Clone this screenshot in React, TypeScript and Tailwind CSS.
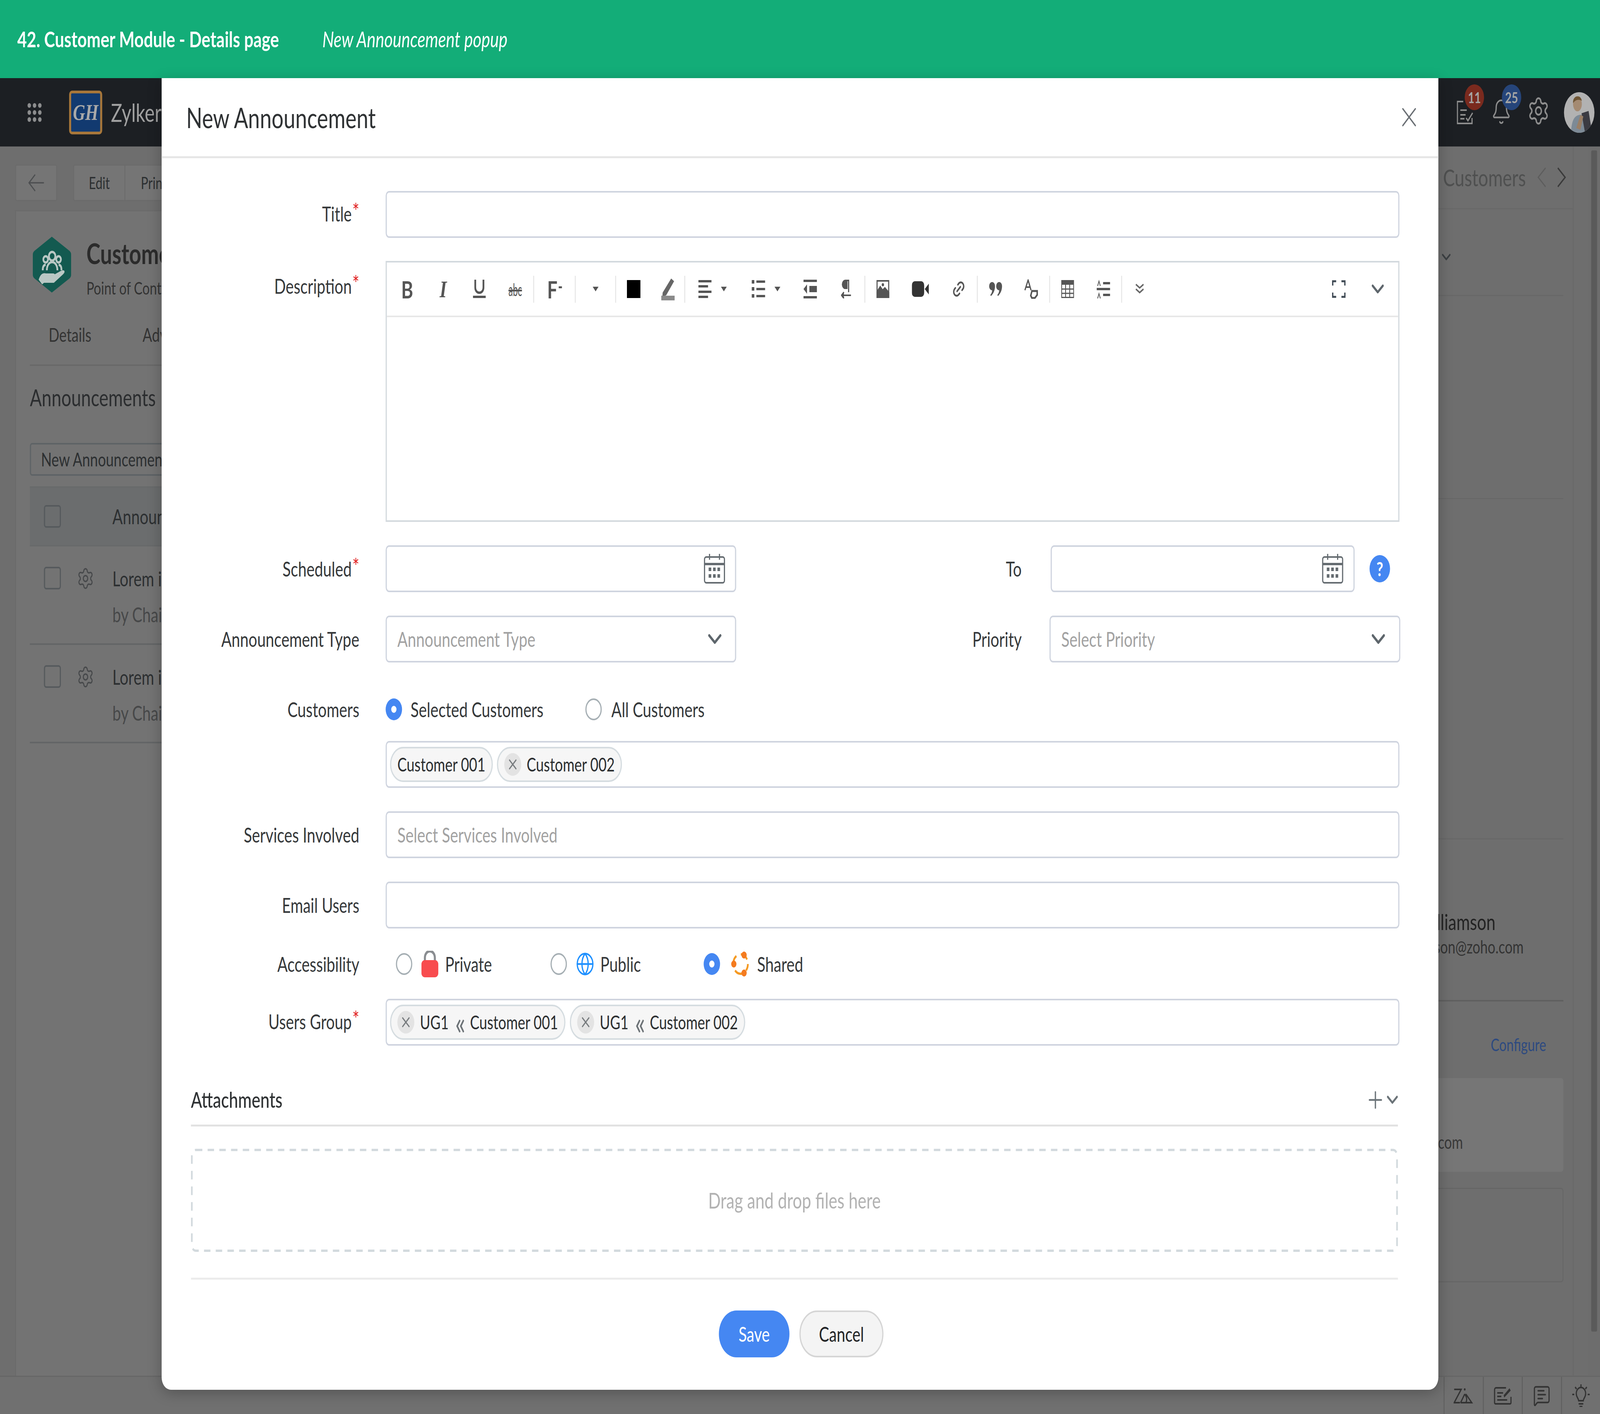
import type { ReactNode } from 'react';
import { Bell, Globe, Link2, MessageSquareText, Plus, Settings, X } from 'lucide-react';

function Req() {
  return <span className="relative top-[-6px] ml-[2px] text-[56px] leading-none text-[#e02020]">*</span>;
}

function Label({ children, className }: { children: ReactNode; className: string }) {
  return <div className={`shrink-0 text-right text-[52px] text-[#35383a] ${className}`}>{children}</div>;
}

function Radio({ on }: { on?: boolean }) {
  return on ? (
    <span className="flex h-[56px] w-[56px] shrink-0 items-center justify-center rounded-full bg-[#4587f2]">
      <span className="h-[18px] w-[18px] rounded-full bg-white" />
    </span>
  ) : (
    <span className="block h-[56px] w-[56px] shrink-0 rounded-full border-[4px] border-[#a6afb4] bg-white" />
  );
}

function ChipClose() {
  return (
    <span className="flex h-[58px] w-[58px] shrink-0 items-center justify-center rounded-full bg-[#e3e3e3] text-[#777b7e]">
      <X size={44} strokeWidth={2} />
    </span>
  );
}

function Chip({ children }: { children: ReactNode }) {
  return (
    <span className="flex h-[90px] items-center rounded-full border-[4px] border-[#d5dce0] bg-[#f6f6f6] px-[21px] text-[48px] text-[#2b2e30]">
      {children}
    </span>
  );
}

function GroupChip({ name }: { name: string }) {
  return (
    <Chip>
      <ChipClose />
      <span className="ml-[19px]">UG1</span>
      <span className="ml-[22px] mr-[15px] text-[84px] leading-none text-[#6d7377]">«</span>
      <span>{name}</span>
    </Chip>
  );
}

function Calendar() {
  return (
    <svg width="74" height="78" viewBox="0 0 74 78" fill="none" stroke="#646b70" strokeWidth="4">
      <rect x="3" y="9" width="68" height="66" rx="6" />
      <path d="M3 27h68" strokeWidth="6" />
      <path d="M20 1v15M54 1v15" />
      <g fill="#646b70" stroke="none">
        <rect x="17" y="36" width="9" height="9" />
        <rect x="32" y="36" width="9" height="9" />
        <rect x="47" y="36" width="9" height="9" />
        <rect x="17" y="53" width="9" height="9" />
        <rect x="32" y="53" width="9" height="9" />
        <rect x="47" y="53" width="9" height="9" />
      </g>
    </svg>
  );
}

function Chevron({ color = '#5e666c', width = 46 }: { color?: string; width?: number }) {
  return (
    <svg width={width} height={(width * 28) / 46} viewBox="0 0 46 28" fill="none" stroke={color} strokeWidth="7" strokeLinecap="round" strokeLinejoin="round">
      <path d="M4 5l19 18L42 5" />
    </svg>
  );
}

function Caret() {
  return (
    <svg width="20" height="12" viewBox="0 0 20 12" fill="#555">
      <path d="M0 0h20L10 12z" />
    </svg>
  );
}

function Sep() {
  return <span className="h-[69px] w-[3px] shrink-0 bg-[#e4e4e4]" />;
}

function Toolbar() {
  return (
    <div className="flex h-[140px] items-center border-b-[4px] border-[#e7e7e7] pl-[8px] text-[#555]">
      <span className="flex w-[123px] justify-center font-['Lato',sans-serif] text-[62px] font-bold leading-none">B</span>
      <span className="flex w-[123px] justify-center font-['Liberation_Serif',serif] text-[62px] font-bold italic leading-none">I</span>
      <span className="flex w-[123px] justify-center">
        <svg width="44" height="48" viewBox="0 0 44 48" fill="none" stroke="#555" strokeWidth="6">
          <path d="M8 0v20c0 18 28 18 28 0V0" />
          <path d="M0 44h44" />
        </svg>
      </span>
      <span className="flex w-[123px] scale-y-[1.5] justify-center text-[30px] leading-none line-through">abc</span>
      <Sep />
      <span className="flex w-[139px] items-start justify-center">
        <span className="text-[62px] font-bold leading-none">F</span>
        <span className="ml-[4px] mt-[24px] h-[5px] w-[11px] bg-[#555]" />
      </span>
      <Sep />
      <span className="flex w-[135px] justify-center"><Caret /></span>
      <Sep />
      <span className="flex w-[120px] justify-center">
        <span className="h-[46px] w-[46px] bg-black" />
      </span>
      <span className="flex w-[113px] justify-center">
        <svg width="46" height="58" viewBox="0 0 46 58" fill="none">
          <path d="M5 38L34 2l10 7-27 36-13 3z" fill="#666" />
          <rect x="0" y="46" width="46" height="12" fill="#8a8a8a" />
        </svg>
      </span>
      <Sep />
      <span className="flex w-[187px] items-center justify-center gap-[32px]">
        <svg width="45" height="46" viewBox="0 0 45 46" fill="#555">
          <rect width="45" height="6" />
          <rect y="13" width="33" height="6" />
          <rect y="27" width="45" height="6" />
          <rect y="40" width="33" height="6" />
        </svg>
        <Caret />
      </span>
      <span className="flex w-[178px] items-center justify-center gap-[32px]">
        <svg width="46" height="46" viewBox="0 0 46 46" fill="#555">
          <rect y="0" width="9" height="9" />
          <rect x="16" y="1" width="30" height="6" />
          <rect y="18" width="9" height="9" />
          <rect x="16" y="20" width="30" height="6" />
          <rect y="36" width="9" height="9" />
          <rect x="16" y="38" width="30" height="6" />
        </svg>
        <Caret />
      </span>
      <span className="flex w-[123px] justify-center">
        <svg width="46" height="48" viewBox="0 0 46 48" fill="#555">
          <rect width="46" height="6" />
          <rect y="42" width="46" height="6" />
          <path d="M0 24l12-12v24z" />
          <rect x="20" y="16" width="26" height="16" />
        </svg>
      </span>
      <span className="flex w-[124px] justify-center">
        <svg width="36" height="48" viewBox="0 0 36 48" fill="none" stroke="#555" strokeWidth="4">
          <path d="M28 2H15a9 9 0 0 0 0 20h5V2M26 2v30" />
          <path d="M15 3a9 9 0 0 0 0 19h5V3z" fill="#555" />
          <path d="M2 40h32" />
          <path d="M10 32l-8 8 8 8" fill="#555" />
        </svg>
      </span>
      <Sep />
      <span className="flex w-[120px] justify-center">
        <svg width="44" height="46" viewBox="0 0 44 46" fill="none" stroke="#555" strokeWidth="4">
          <rect x="2" y="2" width="40" height="42" />
          <path d="M2 30l11-13 8 9 8-6 13 12v12H2z" fill="#555" />
          <circle cx="22" cy="12" r="4" fill="#555" stroke="none" />
        </svg>
      </span>
      <span className="flex w-[136px] justify-center">
        <svg width="58" height="40" viewBox="0 0 58 40" fill="#333">
          <rect y="0" width="42" height="40" rx="10" />
          <path d="M44 20l14-14v28z" />
        </svg>
      </span>
      <span className="flex w-[125px] justify-center text-[#555]">
        <Link2 size={48} strokeWidth={2.4} className="-rotate-45" />
      </span>
      <Sep />
      <span className="flex w-[121px] justify-center">
        <svg width="48" height="36" viewBox="0 0 48 36" fill="#555">
          <path d="M2 10a10 10 0 1 1 20 0c0 12-6 20-14 26l-2-3c4-4 6-7 6-12a10 10 0 0 1-10-11z" />
          <path d="M26 10a10 10 0 1 1 20 0c0 12-6 20-14 26l-2-3c4-4 6-7 6-12a10 10 0 0 1-10-11z" />
        </svg>
      </span>
      <span className="flex w-[123px] justify-center">
        <svg width="48" height="50" viewBox="0 0 48 50" fill="none" stroke="#555" strokeWidth="4">
          <path d="M2 28L13 2l10 26M6 20h14" />
          <path d="M26 30h18v10l-8 8H26l-4-6z" strokeWidth="5" />
        </svg>
      </span>
      <Sep />
      <span className="flex w-[120px] justify-center">
        <svg width="44" height="46" viewBox="0 0 44 46" fill="none" stroke="#555" strokeWidth="3">
          <rect x="1.5" y="1.5" width="41" height="43" />
          <path d="M1.5 7h41" strokeWidth="10" />
          <path d="M1.5 23h41M1.5 34h41M15 12v33M29 12v33" />
        </svg>
      </span>
      <span className="flex w-[123px] justify-center">
        <svg width="46" height="48" viewBox="0 0 46 48" fill="#555">
          <rect x="22" y="6" width="24" height="6" />
          <rect y="21" width="46" height="6" />
          <rect x="22" y="36" width="24" height="6" />
          <path d="M8 0l6 16h-3l-3-9-3 9H2zM8 32l6 16h-3l-3-9-3 9H2z" />
        </svg>
      </span>
      <Sep />
      <span className="flex w-[120px] justify-center">
        <svg width="30" height="30" viewBox="0 0 30 30" fill="none" stroke="#666" strokeWidth="4">
          <path d="M2 3l13 9 13-9M2 15l13 9 13-9" />
        </svg>
      </span>
      <span className="ml-[590px] flex w-[60px] justify-center">
        <svg width="46" height="46" viewBox="0 0 46 46" fill="none" stroke="#3f4a54" strokeWidth="5">
          <path d="M2 14V3h12M32 3h12v11M2 32v11h12M44 32v11H32" />
        </svg>
      </span>
      <span className="ml-[73px] flex w-[60px] justify-center"><Chevron width={42} /></span>
    </div>
  );
}

function Modal() {
  const input = 'h-[120px] rounded-[12px] border-[4px] border-[#cfd4df] bg-white';
  return (
    <div className="absolute left-[552px] top-[200px] flex h-[3358px] w-[4360px] flex-col rounded-b-[32px] bg-white shadow-[0_8px_40px_rgba(0,0,0,0.25)]">
      <div className="flex h-[205px] shrink-0 items-center justify-between border-b-[5px] border-[#e6e6e6] pl-[84px] pr-[57px]">
        <span className="text-[72px] text-[#2f3234]">New Announcement</span>
        <X size={86} strokeWidth={1.1} className="text-[#6b7075]" />
      </div>

      <div className="mt-[84px] flex">
        <Label className="w-[675px] leading-[116px]">Title<Req /></Label>
        <div className={`ml-[90px] w-[3462px] ${input}`} />
      </div>

      <div className="mt-[59px] flex">
        <Label className="w-[675px] pt-[4px] leading-[120px]">Description<Req /></Label>
        <div className="ml-[90px] h-[668px] w-[3462px] border-[4px] border-[#d3d9de]">
          <Toolbar />
        </div>
      </div>

      <div className="mt-[60px] flex items-center">
        <Label className="w-[675px]">Scheduled<Req /></Label>
        <div className={`ml-[90px] flex w-[1197px] items-center justify-end pr-[33px] ${input}`}><Calendar /></div>
        <Label className="w-[975px]">To</Label>
        <div className={`ml-[99px] flex w-[1038px] items-center justify-end pr-[34px] ${input}`}><Calendar /></div>
        <span className="ml-[51px] flex h-[70px] w-[70px] items-center justify-center rounded-full bg-[#4587f2] text-[50px] font-bold text-white">?</span>
      </div>

      <div className="mt-[60px] flex items-center">
        <Label className="w-[675px]">Announcement Type</Label>
        <div className={`ml-[90px] flex w-[1197px] items-center justify-between pl-[36px] pr-[46px] text-[52px] text-[#a2a2a2] ${input}`}>
          Announcement Type
          <Chevron />
        </div>
        <Label className="w-[975px]">Priority</Label>
        <div className={`ml-[95px] flex w-[1198px] items-center justify-between pl-[36px] pr-[48px] text-[52px] text-[#a2a2a2] ${input}`}>
          Select Priority
          <Chevron />
        </div>
      </div>

      <div className="mt-[92px] flex h-[56px] items-center">
        <Label className="w-[675px]">Customers</Label>
        <div className="ml-[90px] flex items-center text-[52px] text-[#35383a]">
          <Radio on />
          <span className="ml-[29px]">Selected Customers</span>
          <span className="ml-[143px] flex"><Radio /></span>
          <span className="ml-[33px]">All Customers</span>
        </div>
      </div>

      <div className={`ml-[765px] mt-[53px] flex w-[3462px] items-center gap-[14px] pl-[11px] ${input}`}>
        <Chip>Customer 001</Chip>
        <Chip>
          <ChipClose />
          <span className="ml-[19px]">Customer 002</span>
        </Chip>
      </div>

      <div className="mt-[60px] flex items-center">
        <Label className="w-[675px]">Services Involved</Label>
        <div className={`ml-[90px] flex w-[3462px] items-center pl-[36px] text-[52px] text-[#a2a2a2] ${input}`}>Select Services Involved</div>
      </div>

      <div className="mt-[60px] flex items-center">
        <Label className="w-[675px]">Email Users</Label>
        <div className={`ml-[90px] w-[3462px] ${input}`} />
      </div>

      <div className="mt-[55px] flex h-[72px] items-center">
        <Label className="w-[675px]">Accessibility</Label>
        <div className="ml-[125px] flex items-center text-[52px] text-[#35383a]">
          <Radio />
          <svg className="ml-[31px]" width="58" height="68" viewBox="0 0 58 68" fill="none">
            <path d="M12 30V18a17 17 0 0 1 34 0v12" stroke="#8a8d91" strokeWidth="7" />
            <rect y="24" width="58" height="44" rx="11" fill="#f84c4f" />
          </svg>
          <span className="ml-[23px]">Private</span>
          <span className="ml-[200px] flex"><Radio /></span>
          <Globe size={64} strokeWidth={1.6} className="ml-[30px] text-[#1e90ff]" />
          <span className="ml-[20px]">Public</span>
          <span className="ml-[214px] flex"><Radio on /></span>
          <svg className="ml-[38px]" width="64" height="64" viewBox="0 0 64 64" fill="none">
            <circle cx="32" cy="32" r="25" stroke="#f59a23" strokeWidth="6" strokeDasharray="26 16" strokeDashoffset="8" />
            <circle cx="9" cy="32" r="9" fill="#f47b20" />
            <circle cx="44" cy="9" r="9" fill="#f47b20" />
            <circle cx="44" cy="55" r="9" fill="#f47b20" />
          </svg>
          <span className="ml-[25px]">Shared</span>
        </div>
      </div>

      <div className="mt-[53px] flex items-center">
        <Label className="relative top-[-2px] w-[675px]">Users Group<Req /></Label>
        <div className={`ml-[90px] flex w-[3462px] items-center gap-[15px] pl-[11px] ${input}`}>
          <GroupChip name="Customer 001" />
          <GroupChip name="Customer 002" />
        </div>
      </div>

      <div className="ml-[100px] mr-[138px] mt-[100px] flex h-[107px] shrink-0 items-start justify-between border-b-[5px] border-[#e2e2e2]">
        <span className="text-[56px] font-medium leading-[76px] text-[#2f3234]">Attachments</span>
        <span className="flex items-center gap-[4px] pt-[4px] text-[#6b7378]">
          <Plus size={70} strokeWidth={1.5} />
          <Chevron color="#6b7378" width={38} />
        </span>
      </div>

      <div className="relative ml-[100px] mr-[138px] mt-[57px] flex h-[264px] shrink-0 items-center justify-center text-[56px] text-[#b2b2b2]">
        <svg className="absolute inset-0" width="4122" height="264" fill="none">
          <rect x="3" y="3" width="4116" height="258" rx="14" stroke="#d3dade" strokeWidth="6" strokeDasharray="22 18" />
        </svg>
        Drag and drop files here
      </div>

      <div className="ml-[100px] mr-[138px] mt-[66px] shrink-0 border-b-[5px] border-[#ececec]" />

      <div className="mt-[79px] flex justify-center gap-[34px] pl-[8px] text-[52px]">
        <span className="flex h-[120px] w-[241px] items-center justify-center rounded-full bg-[#4587f2] text-white">Save</span>
        <span className="flex h-[120px] w-[287px] items-center justify-center rounded-full border-[4px] border-[#d5d5d5] bg-[#f4f4f4] text-[#232527]">Cancel</span>
      </div>
    </div>
  );
}

function HexLogo() {
  return (
    <svg width="131" height="147" viewBox="0 0 131 147" className="shrink-0">
      <path d="M65 2L125 38q6 4 6 10v51q0 6-6 10L65 145 6 109q-6-4-6-10V48q0-6 6-10z" fill="#135a50" />
      <g fill="none" stroke="#b9c8c4" strokeWidth="6">
        <circle cx="66" cy="52" r="11" />
        <circle cx="44" cy="60" r="8" />
        <circle cx="88" cy="60" r="8" />
        <path d="M48 88c0-28 36-28 36 0M34 88c0-10 4-14 10-14M98 88c0-10-4-14-10-14" />
      </g>
      <path d="M20 112c6-14 14-18 24-16h26c8 0 8 10 0 10H56l34-14c6-3 16-6 18-2 2 4-4 8-10 12l-26 18H38l-6 4z" fill="#b9c8c4" />
    </svg>
  );
}

function RowCheck() {
  return <span className="h-[58px] w-[58px] shrink-0 rounded-[8px] border-[4px] border-[#565a5d]" />;
}

function BackgroundLeft() {
  return (
    <div className="flex w-[1100px] shrink-0 flex-col overflow-hidden pl-[52px] pt-[46px] text-[#2c2f31]">
      <div className="flex h-[94px] shrink-0">
        <span className="flex w-[143px] items-center justify-center rounded-[6px] border-[3px] border-[#6b6b6b] bg-[#757575] text-[#4d4f51]">
          <svg width="56" height="46" viewBox="0 0 56 46" fill="none" stroke="currentColor" strokeWidth="3.5">
            <path d="M54 23H3M24 2L3 23l21 21" />
          </svg>
        </span>
        <span className="ml-[55px] flex w-[178px] items-center justify-center rounded-l-[6px] border-[3px] border-[#6b6b6b] bg-[#757575] text-[42px]">Edit</span>
        <span className="flex w-[300px] items-center rounded-r-[6px] border-y-[3px] border-r-[3px] border-[#6b6b6b] bg-[#757575] pl-[53px] text-[42px]">Print</span>
      </div>
      <div className="mt-[23px] flex flex-1 flex-col border-l-[3px] border-t-[3px] border-[#6b6b6b] bg-[#737373] pl-[47px]">
        <div className="ml-[10px] mt-[63px] flex h-[147px] shrink-0">
          <HexLogo />
          <div className="ml-[52px] flex flex-col">
            <span className="text-[72px] font-bold leading-[88px] text-[#2b2b2b]">Customer</span>
            <span className="mt-[12px] text-[44px] text-[#333]">Point of Contact</span>
          </div>
        </div>
        <div className="mt-[70px] flex h-[116px] shrink-0 border-b-[4px] border-[#696969] pl-[64px] text-[48px] text-[#333]">
          <span>Details</span>
          <span className="ml-[175px]">Advanced</span>
        </div>
        <span className="mt-[42px] shrink-0 text-[60px] leading-[76px] text-[#2b2d2f]">Announcements</span>
        <span className="mt-[79px] flex h-[84px] w-[700px] shrink-0 items-center rounded-[8px] border-[4px] border-[#5e6366] pl-[34px] text-[48px]">New Announcement</span>
        <div className="mt-[27px] flex h-[154px] shrink-0 items-center border-y-[4px] border-[#686a6b] bg-[#6b6d6e] pl-[48px] text-[52px]">
          <RowCheck />
          <span className="ml-[176px]">Announcement</span>
        </div>
        {[0, 1].map(i => (
          <div key={i} className="flex h-[252px] shrink-0 items-start border-b-[4px] border-[#636566] pl-[48px] pt-[52px]">
            <RowCheck />
            <Settings size={60} strokeWidth={1.5} className="ml-[54px] text-[#47494b]" />
            <div className="ml-[62px] flex flex-col text-[52px]">
              <span className="leading-[60px]">Lorem ipsum</span>
              <span className="mt-[32px] leading-[60px] text-[#474849]">by Chairman</span>
            </div>
          </div>
        ))}
      </div>
    </div>
  );
}

function BackgroundRight() {
  return (
    <div className="ml-auto flex w-[1000px] shrink-0">
      <div className="flex w-[910px] flex-col border-r-[3px] border-[#686868] pr-[32px] text-right">
        <div className="-mr-[32px] flex h-[161px] shrink-0 items-center justify-end border-b-[3px] border-[#686868] pr-[23px] text-[60px] text-[#4f5050]">
          <span>Customers</span>
          <svg className="ml-[39px]" width="30" height="52" viewBox="0 0 30 52" fill="none" stroke="#5d5d5d" strokeWidth="3.5">
            <path d="M28 2L3 26l25 24" />
          </svg>
          <svg className="ml-[38px]" width="30" height="52" viewBox="0 0 30 52" fill="none" stroke="#3a3a3a" strokeWidth="4">
            <path d="M2 2l25 24L2 50" />
          </svg>
        </div>
        <div className="flex h-[222px] shrink-0 items-start justify-start border-b-[3px] border-[#686868] pl-[460px] pt-[113px]">
          <Chevron color="#3b3f42" width={30} />
        </div>
        <div className="h-[520px] shrink-0 border-b-[3px] border-[#686868]" />
        <div className="h-[871px] shrink-0 border-b-[3px] border-[#686868]" />
        <div className="mt-[178px] h-[72px] shrink-0 pr-[232px] text-[56px] leading-[66px] text-[#232323]">Williamson</div>
        <div className="h-[165px] shrink-0 border-b-[4px] border-[#606060] pr-[136px] text-[46px] leading-[50px] text-[#333]">williamson@zoho.com</div>
        <div className="mt-[85px] h-[78px] shrink-0 pr-[59px] text-[44px] leading-[50px] text-[#2d4a80]">Configure</div>
        <div className="mt-[33px] flex h-[240px] shrink-0 flex-col justify-end rounded-[8px] bg-[#767676] pb-[51px] pr-[343px] text-[46px] leading-[50px] text-[#383838]">user@zoho.com</div>
        <div className="mt-[41px] h-[242px] shrink-0 rounded-[8px] border-[3px] border-[#666]" />
      </div>
      <div className="w-[51px] shrink-0" />
      <div className="flex w-[39px] shrink-0 bg-[#6d6d6d]">
        <div className="ml-[9px] mt-[10px] h-[3024px] w-[20px] rounded-[4px] bg-[#5a5a5a]" />
      </div>
    </div>
  );
}

function FooterCell({ children }: { children: ReactNode }) {
  return <span className="flex h-full w-[133.5px] items-center justify-center border-l-[3px] border-[#5e5e5e] text-[#333]">{children}</span>;
}

export default function App() {
  // the window may be narrower than the 5464x3620 design, so fit the page to it
  const sx = window.innerWidth / 5464;
  const sy = window.innerHeight / 3620;

  return (
    <div className="h-screen w-screen overflow-hidden">
      <div
        className="relative flex h-[3620px] w-[5464px] origin-top-left flex-col overflow-hidden bg-[#6f6f6f] font-['Lato','Noto_Sans',sans-serif]"
        style={{ transform: `scale(${sx}, ${sy})` }}
      >
        <div className="flex h-[200px] shrink-0 items-center bg-[#13ad78] pl-[59px] text-[56px] text-white">
          <span className="font-bold">42. Customer Module - Details page</span>
          <span className="ml-[148px] italic">New Announcement popup</span>
        </div>

        <div className="flex h-[175px] shrink-0 items-center justify-between bg-[#1c1f23] pl-[94px] pr-[19px]">
          <div className="flex items-center">
            <span className="grid grid-cols-3 gap-[6px]">
              {[0, 1, 2, 3, 4, 5, 6, 7, 8].map(i => (
                <span key={i} className="h-[12px] w-[12px] rounded-full bg-[#8c8d8e]" />
              ))}
            </span>
            <span className="ml-[94px] flex h-[112px] w-[113px] items-center justify-center rounded-[10px] border-[7px] border-[#a8773a] bg-[#123a70] font-['Liberation_Serif',serif] text-[58px] font-bold italic text-[#a9a9a9]">GH</span>
            <span className="ml-[30px] text-[64px] text-[#a0a0a0]">Zylker</span>
          </div>
          <div className="flex items-center">
            <span className="relative mb-[38px] flex h-[105px] w-[117px] items-end pb-[3px]">
              <svg width="62" height="60" viewBox="0 0 62 60" fill="none" stroke="#8d8d8d" strokeWidth="4">
                <path d="M22 2H2v56h50V44" />
                <path d="M12 24h22M12 36h18M12 46h14M32 44l6 7 16-20" />
              </svg>
              <span className="absolute left-[27px] top-0 flex h-[66px] w-[66px] items-center justify-center rounded-full bg-[#7a2a1e] text-[38px] font-bold text-[#a5a5a5]">11</span>
            </span>
            <span className="relative mb-[38px] flex h-[105px] w-[123px] items-end">
              <Bell size={70} strokeWidth={1.5} className="text-[#8d8d8d]" />
              <span className="absolute left-[37px] top-0 flex h-[66px] w-[66px] items-center justify-center rounded-full bg-[#26457a] text-[38px] font-bold text-[#a5a5a5]">25</span>
            </span>
            <Settings size={78} strokeWidth={1.5} className="mb-[8px] text-[#8d8d8d]" />
            <span className="ml-[48px] h-[104px] w-[104px] overflow-hidden rounded-full bg-[#b2b2b2]">
              <svg width="104" height="104" viewBox="0 0 104 104">
                <path d="M24 104c2-30 10-44 30-46s26 12 28 46z" fill="#7d8a96" />
                <path d="M60 54l24-6 12 56H72z" fill="#3b3b42" />
                <path d="M42 92l14-34 10 4-10 34z" fill="#9a7f66" />
                <ellipse cx="46" cy="30" rx="15" ry="19" fill="#a48a72" />
                <path d="M31 28c-2-20 26-24 30-6-10-4-20-4-30 6z" fill="#6e5534" />
              </svg>
            </span>
          </div>
        </div>

        <div className="flex min-h-0 flex-1 bg-[#6e6e6e]">
          <BackgroundLeft />
          <BackgroundRight />
        </div>

        <div className="flex h-[98px] shrink-0 justify-end border-t-[3px] border-[#666] bg-[#707070]">
          <FooterCell>
            <svg width="68" height="44" viewBox="0 0 68 44" fill="none" stroke="#333" strokeWidth="4">
              <path d="M2 6h24L2 40h20M24 40l14-22M38 18c8 8 8 16 4 22H24M42 18l20 22H42" />
              <circle cx="38" cy="6" r="3" fill="#333" stroke="none" />
            </svg>
          </FooterCell>
          <FooterCell>
            <svg width="62" height="46" viewBox="0 0 62 46" fill="none" stroke="#333" strokeWidth="4">
              <path d="M42 3H8a5 5 0 0 0-5 5v33a3 3 0 0 0 3 3h50a3 3 0 0 0 3-3V26" />
              <path d="M12 16h20M12 25h14M12 34h34" />
              <path d="M36 28l22-18-4-6-20 18z" fill="#333" stroke="none" />
            </svg>
          </FooterCell>
          <FooterCell><MessageSquareText size={60} strokeWidth={1.6} /></FooterCell>
          <FooterCell>
            <svg width="60" height="58" viewBox="0 0 60 58" fill="none" stroke="#333" strokeWidth="4">
              <path d="M30 0v6M10 7l5 5M50 7l-5 5M0 26h7M53 26h7" />
              <path d="M22 42c0-6-8-9-8-18a16 16 0 0 1 32 0c0 9-8 12-8 18z" />
              <path d="M22 50h16M25 57h10" />
            </svg>
          </FooterCell>
        </div>

        <Modal />
      </div>
    </div>
  );
}
